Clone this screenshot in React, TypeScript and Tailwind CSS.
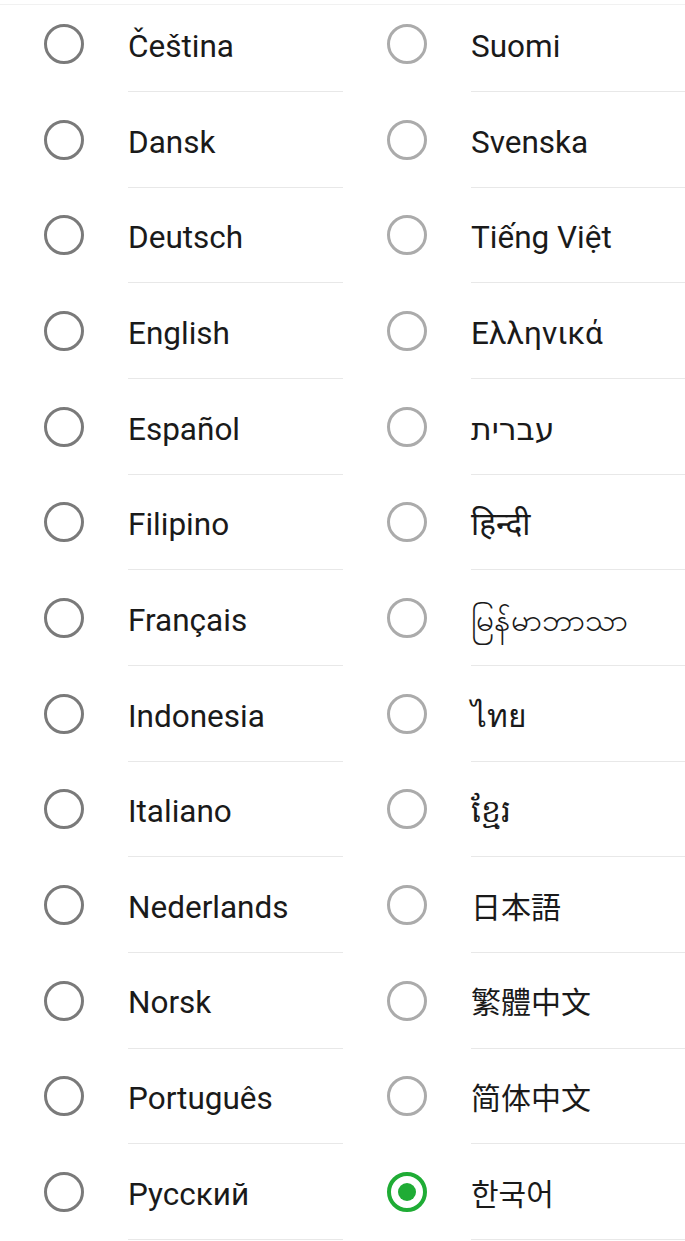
const left = [
  "Čeština",
  "Dansk",
  "Deutsch",
  "English",
  "Español",
  "Filipino",
  "Français",
  "Indonesia",
  "Italiano",
  "Nederlands",
  "Norsk",
  "Português",
  "Русский",
];

const cjk = (f: string) => `Roboto, "${f}", "Noto Sans", "DejaVu Sans", sans-serif`;

const right: { label: string; font?: string; selected?: boolean }[] = [
  { label: "Suomi" },
  { label: "Svenska" },
  { label: "Tiếng Việt" },
  { label: "Ελληνικά" },
  { label: "עברית" },
  { label: "हिन्दी" },
  { label: "မြန်မာဘာသာ" },
  { label: "ไทย" },
  { label: "ខ្មែរ" },
  { label: "日本語", font: cjk("Noto Sans CJK JP") },
  { label: "繁體中文", font: cjk("Noto Sans CJK TC") },
  { label: "简体中文", font: cjk("Noto Sans CJK SC") },
  { label: "한국어", font: cjk("Noto Sans CJK KR"), selected: true },
];

const baseFont = 'Roboto, "Noto Sans", "DejaVu Sans", "Noto Sans CJK KR", sans-serif';

function Radio({ dark, selected }: { dark?: boolean; selected?: boolean }) {
  if (selected) {
    return (
      <span className="flex h-[40px] w-[40px] items-center justify-center rounded-full border-[4px] border-[#1fac35]">
        <span className="h-[18px] w-[18px] rounded-full bg-[#1fac35]" />
      </span>
    );
  }
  return (
    <span
      className={`block h-[40px] w-[40px] rounded-full border-[3.5px] ${
        dark ? "border-[#7a7a7a]" : "border-[#ababab]"
      }`}
    />
  );
}

function Row({ label, dark, selected, font }: { label: string; dark?: boolean; selected?: boolean; font?: string }) {
  return (
    <div className="flex h-[95.67px] items-stretch">
      <div className="flex w-[128px] shrink-0 items-center pl-[44px]">
        <Radio dark={dark} selected={selected} />
      </div>
      <div className="flex flex-1 items-center border-b border-[#e8e8e8] pt-[6px]">
        <span
          className={`${font ? "text-[30px]" : "text-[31.5px]"} leading-none text-[#1a1a1a]`}
          style={font ? { fontFamily: font } : undefined}
        >
          {label}
        </span>
      </div>
    </div>
  );
}

export default function App() {
  return (
    <div className="relative h-[1241px] w-[685px] overflow-hidden bg-white" style={{ fontFamily: baseFont }}>
      <div className="absolute left-0 right-0 top-[4px] h-px bg-[#f1f1f1]" />
      <div className="-mt-[3.67px] grid grid-cols-[343px_342px]">
        <div className="flex flex-col">
          {left.map((l) => (
            <Row key={l} label={l} dark />
          ))}
        </div>
        <div className="flex flex-col">
          {right.map((r) => (
            <Row key={r.label} label={r.label} selected={r.selected} font={r.font} />
          ))}
        </div>
      </div>
    </div>
  );
}
